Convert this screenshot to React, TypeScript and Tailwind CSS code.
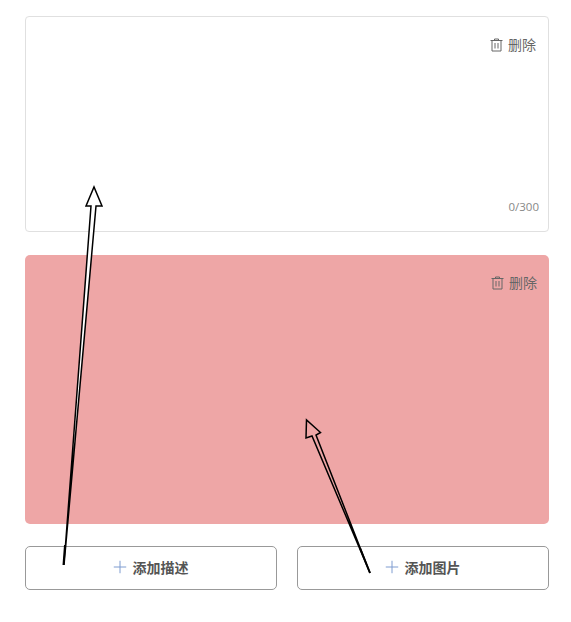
import { Plus } from "lucide-react";

const FONT = "font-['Open_Sans','Noto_Sans_CJK_SC',sans-serif]";

function TrashIcon() {
  return (
    <svg width="13" height="14" viewBox="0 0 13 14" fill="none" stroke="currentColor" strokeWidth="1">
      <path d="M0.500 2.500h12M4.500 2.500V1h4v1.500M2 2.500V13h9V2.500M5 5v5.500M8 5v5.500" />
    </svg>
  );
}

function DeleteButton() {
  return (
    <div className="flex items-center gap-[5px] text-[14px] leading-[18px] text-[#666666]">
      <TrashIcon />
      <span>删除</span>
    </div>
  );
}

function AddButton({ label }: { label: string }) {
  return (
    <button className="flex h-[44px] flex-1 items-center justify-center gap-[3px] rounded-[5px] border border-[#999999] bg-white pr-[4px] pb-[2px] text-[14px] font-bold text-[#555555]">
      <Plus className="h-5 w-5 text-[#7f9cd0]" strokeWidth={1.2} />
      <span>{label}</span>
    </button>
  );
}

export default function App() {
  return (
    <div className={`relative h-[622px] w-[571px] overflow-hidden bg-white pt-4 pl-[25px] ${FONT}`}>
      <div className="flex w-[524px] flex-col">
        <div className="flex h-[216px] flex-col justify-between rounded-[4px] border border-[#e0e0e0] bg-white pt-[19px] pr-[12px] pb-[16px]">
          <div className="flex justify-end">
            <DeleteButton />
          </div>
          <div className="-mr-[3px] text-right text-[11.5px] leading-[16px] text-[#888888]">0/300</div>
        </div>

        <div className="mt-[23px] flex h-[269px] items-start justify-end rounded-[5px] bg-[#eea6a6] pt-[19px] pr-[12px]">
          <DeleteButton />
        </div>

        <div className="mt-[22px] flex gap-[20px]">
          <AddButton label="添加描述" />
          <AddButton label="添加图片" />
        </div>
      </div>

      {/* annotation arrows */}
      <svg className="pointer-events-none absolute inset-0" width="571" height="622" fill="none" stroke="#000000" strokeWidth="1.5">
        <path d="M64 565 L91 206 L86 206 L94 187 L102 206 L96 206 L64 565 Z" fill="#ffffff" strokeLinejoin="miter" />
        <path d="M370 573 L312 436 L306 438 L306.500 420 L320.500 432.500 L316 435 L370 573 Z" fill="#eea6a6" strokeLinejoin="miter" />
        <path d="M63.500 565 L65 545 M370 573 L360 548" strokeWidth="2" />
      </svg>
    </div>
  );
}
